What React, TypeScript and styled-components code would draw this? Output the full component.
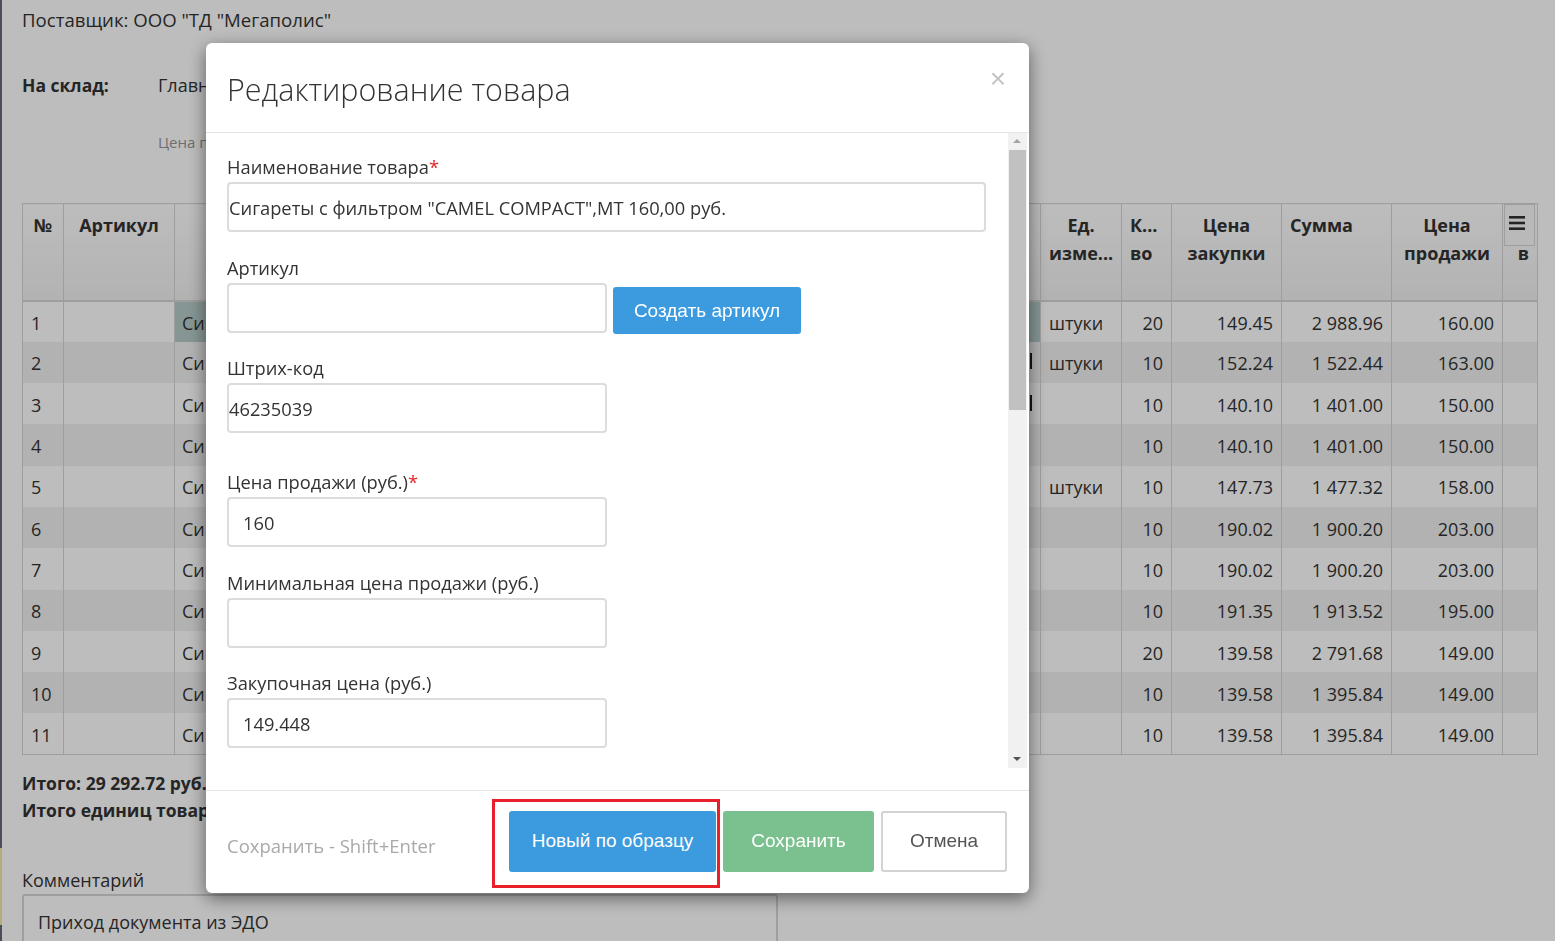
import React from "react";
import styled, { createGlobalStyle } from "styled-components";

const GlobalStyle = createGlobalStyle`
  html, body {
    margin: 0;
    padding: 0;
    height: 100%;
    overflow: hidden;
  }
  body {
    background: #fff;
    font-family: "Open Sans", "Liberation Sans", sans-serif;
    color: #333;
  }
  * {
    box-sizing: border-box;
  }
`;

type Row = {
  unit: string;
  qty: number;
  buy: string;
  sum: string;
  sell: string;
  mark?: boolean;
};

const rows: Row[] = [
  { unit: "штуки", qty: 20, buy: "149.45", sum: "2 988.96", sell: "160.00" },
  { unit: "штуки", qty: 10, buy: "152.24", sum: "1 522.44", sell: "163.00", mark: true },
  { unit: "", qty: 10, buy: "140.10", sum: "1 401.00", sell: "150.00", mark: true },
  { unit: "", qty: 10, buy: "140.10", sum: "1 401.00", sell: "150.00" },
  { unit: "штуки", qty: 10, buy: "147.73", sum: "1 477.32", sell: "158.00" },
  { unit: "", qty: 10, buy: "190.02", sum: "1 900.20", sell: "203.00" },
  { unit: "", qty: 10, buy: "190.02", sum: "1 900.20", sell: "203.00" },
  { unit: "", qty: 10, buy: "191.35", sum: "1 913.52", sell: "195.00" },
  { unit: "", qty: 20, buy: "139.58", sum: "2 791.68", sell: "149.00" },
  { unit: "", qty: 10, buy: "139.58", sum: "1 395.84", sell: "149.00" },
  { unit: "", qty: 10, buy: "139.58", sum: "1 395.84", sell: "149.00" },
];

const colWidths = [41, 111, 866, 81, 50, 110, 110, 111, 35];

const HamburgerIcon = () => (
  <svg width="18" height="16" viewBox="0 0 18 16">
    <rect x="1" y="1" width="16" height="2.6" fill="#333" />
    <rect x="1" y="6.7" width="16" height="2.6" fill="#333" />
    <rect x="1" y="12.4" width="16" height="2.6" fill="#333" />
  </svg>
);

export default function App() {
  return (
    <>
      <GlobalStyle />
      <Shell>
        <Strip>
          <StripPart $h={848} />
          <StripPart $h={77} $accent />
          <StripPart $h={0} />
        </Strip>
        <Main>
          <Supplier>Поставщик: ООО "ТД "Мегаполис"</Supplier>
          <WarehouseRow>
            <WarehouseLabel>На склад:</WarehouseLabel>
            <span>Главный склад</span>
          </WarehouseRow>
          <PriceHint>Цена продажи рассчитывается автоматически</PriceHint>

          <Table>
            <colgroup>
              {colWidths.map((w, i) => (
                <col key={i} style={{ width: w }} />
              ))}
            </colgroup>
            <thead>
              <tr>
                <Th $align="center">№</Th>
                <Th $align="center">Артикул</Th>
                <Th $align="center">Наименование</Th>
                <Th $align="center">
                  Ед.
                  <br />
                  изме...
                </Th>
                <Th>
                  К...
                  <br />
                  во
                </Th>
                <Th $align="center">
                  Цена
                  <br />
                  закупки
                </Th>
                <Th>Сумма</Th>
                <Th $align="center">
                  Цена
                  <br />
                  продажи
                </Th>
                <MenuTh>
                  <MenuBox>
                    <HamburgerIcon />
                  </MenuBox>
                  <MenuTail>в</MenuTail>
                </MenuTh>
              </tr>
            </thead>
            <tbody>
              {rows.map((r, i) => (
                <Tr key={i} $striped={i % 2 === 1}>
                  <Td>{i + 1}</Td>
                  <Td />
                  <Td $selected={i === 0} $padLeft={7}>
                    {r.mark && <CellMark />}
                    Сигареты с фильтром
                  </Td>
                  <Td>{r.unit}</Td>
                  <Td $align="right">{r.qty}</Td>
                  <Td $align="right">{r.buy}</Td>
                  <Td $align="right">{r.sum}</Td>
                  <Td $align="right">{r.sell}</Td>
                  <Td />
                </Tr>
              ))}
            </tbody>
          </Table>

          <Totals>
            <div>Итого: 29 292.72 руб.</div>
            <div>Итого единиц товара: 190</div>
          </Totals>

          <CommentLabel>Комментарий</CommentLabel>
          <CommentBox>Приход документа из ЭДО</CommentBox>
        </Main>
      </Shell>

      <Backdrop />

      <Modal>
        <ModalHeader>
          <ModalTitle>Редактирование товара</ModalTitle>
          <CloseButton>×</CloseButton>
        </ModalHeader>

        <ModalBody>
          <ScrollArea>
            <Form>
              <Field>
                <Label>
                  Наименование товара<Req>*</Req>
                </Label>
                <Input $wide $flush>
                  Сигареты с фильтром "CAMEL COMPACT",МТ 160,00 руб.
                </Input>
              </Field>

              <Field $gap={23}>
                <Label>Артикул</Label>
                <InputRow>
                  <Input />
                  <BlueButton $small>Создать артикул</BlueButton>
                </InputRow>
              </Field>

              <Field $gap={37}>
                <Label>Штрих-код</Label>
                <Input $flush>46235039</Input>
              </Field>

              <Field>
                <Label>
                  Цена продажи (руб.)<Req>*</Req>
                </Label>
                <Input>160</Input>
              </Field>

              <Field $gap={23}>
                <Label>Минимальная цена продажи (руб.)</Label>
                <Input />
              </Field>

              <Field>
                <Label>Закупочная цена (руб.)</Label>
                <Input>149.448</Input>
              </Field>

              <Field>
                <Label>Наценка (%)</Label>
                <Input>7.06</Input>
              </Field>
            </Form>
            <ScrollTrack>
              <ScrollArrow $up />
              <ScrollThumb />
              <ScrollSpace />
              <ScrollArrow />
            </ScrollTrack>
          </ScrollArea>
        </ModalBody>

        <ModalFooter>
          <ShortcutHint>Сохранить - Shift+Enter</ShortcutHint>
          <FooterButtons>
            <Marked>
              <BlueButton>Новый по образцу</BlueButton>
              <Highlight />
            </Marked>
            <GreenButton>Сохранить</GreenButton>
            <CancelButton>Отмена</CancelButton>
          </FooterButtons>
        </ModalFooter>
      </Modal>
    </>
  );
}

/* ---------- page behind ---------- */

const Shell = styled.div`
  display: flex;
  min-height: 100vh;
`;

const Strip = styled.div`
  width: 2px;
  display: flex;
  flex-direction: column;
  flex-shrink: 0;
`;

const StripPart = styled.div<{ $h: number; $accent?: boolean }>`
  height: ${({ $h }) => ($h ? `${$h}px` : "auto")};
  flex: ${({ $h }) => ($h ? "none" : "1")};
  background: ${({ $accent }) => ($accent ? "#f3eaa6" : "#646a78")};
`;

const Main = styled.div`
  flex: 1;
  padding: 8px 0 0 20px;
  font-size: 18px;
`;

const Supplier = styled.div`
  line-height: 24px;
  font-size: 18.6px;
`;

const WarehouseRow = styled.div`
  display: grid;
  grid-template-columns: 136px 1fr;
  margin-top: 41px;
  line-height: 24px;
`;

const WarehouseLabel = styled.span`
  font-weight: 700;
  font-size: 17.5px;
`;

const PriceHint = styled.div`
  margin: 35px 0 0 136px;
  font-size: 15px;
  line-height: 20px;
  color: #959595;
`;

const Table = styled.table`
  margin-top: 51px;
  width: 1515px;
  border-collapse: collapse;
  table-layout: fixed;
  border: 1px solid #d6d6d6;
`;

const Th = styled.th<{ $align?: string }>`
  height: 97px;
  padding: 7px 8px 0 8px;
  vertical-align: top;
  text-align: ${({ $align }) => $align ?? "left"};
  font-weight: 700;
  line-height: 28px;
  white-space: nowrap;
  overflow: hidden;
  background: linear-gradient(#ffffff, #f1f1f1);
  border-left: 1px solid #d6d6d6;
  border-bottom: 2px solid #d6d6d6;
`;

const MenuTh = styled.th`
  padding: 0;
  vertical-align: top;
  background: linear-gradient(#ffffff, #f1f1f1);
  border-left: 1px solid #d6d6d6;
  border-bottom: 2px solid #d6d6d6;
`;

const MenuBox = styled.div`
  width: 31px;
  height: 42px;
  margin-left: 1px;
  border: 1px solid #d6d6d6;
  display: flex;
  justify-content: center;
  padding: 10px 5px 0 0;
  background: #fafafa;
`;

const MenuTail = styled.div`
  text-align: right;
  padding-right: 8px;
  line-height: 14px;
  font-weight: 700;
`;

const Tr = styled.tr<{ $striped: boolean }>`
  background: ${({ $striped }) => ($striped ? "#f1f1f1" : "#fff")};
`;

const Td = styled.td<{ $align?: string; $selected?: boolean; $padLeft?: number }>`
  height: 41.3px;
  padding: 2px 8px 0 ${({ $padLeft }) => $padLeft ?? 8}px;
  text-align: ${({ $align }) => $align ?? "left"};
  white-space: nowrap;
  overflow: hidden;
  border-left: 1px solid #d6d6d6;
  background: ${({ $selected }) => ($selected ? "#b5cbc9" : "transparent")};
`;

const CellMark = styled.span`
  float: right;
  width: 2px;
  height: 16px;
  margin: 2px 0 0 0;
  background: #1e1e1e;
`;

const Totals = styled.div`
  margin-top: 15px;
  font-weight: 700;
  font-size: 17.5px;
  line-height: 27px;
`;

const CommentLabel = styled.div`
  margin-top: 44px;
  line-height: 24px;
`;

const CommentBox = styled.div`
  width: 756px;
  height: 80px;
  margin-top: 2px;
  border: 2px solid #d6d6d6;
  border-radius: 3px;
  padding: 14px 14px;
  line-height: 24px;
`;

/* ---------- modal ---------- */

const Backdrop = styled.div`
  position: fixed;
  inset: 0;
  background: rgba(0, 0, 0, 0.26);
`;

const Modal = styled.div`
  position: fixed;
  left: 206px;
  top: 43px;
  width: 823px;
  height: 850px;
  background: #fff;
  border-radius: 6px;
  box-shadow: 0 5px 18px rgba(0, 0, 0, 0.5);
  display: flex;
  flex-direction: column;
  overflow: hidden;
`;

const ModalHeader = styled.div`
  height: 90px;
  flex-shrink: 0;
  display: flex;
  justify-content: space-between;
  align-items: center;
  padding: 2px 23px 0 21px;
  border-bottom: 1px solid #e5e5e5;
`;

const ModalTitle = styled.h4`
  margin: 0;
  font-size: 30.5px;
  font-weight: 300;
  color: #333;
  line-height: 40px;
`;

const CloseButton = styled.span`
  align-self: flex-start;
  margin-top: 22px;
  font-family: "Liberation Sans", Arial, sans-serif;
  font-size: 28px;
  line-height: 24px;
  color: #c4c4c4;
`;

const ModalBody = styled.div`
  flex: 1;
  padding-bottom: 22px;
  display: flex;
  min-height: 0;
`;

const ScrollArea = styled.div`
  flex: 1;
  display: flex;
  overflow: hidden;
`;

const Form = styled.div`
  flex: 1;
  padding: 22px 0 0 21px;
  overflow: hidden;
`;

const Field = styled.div<{ $gap?: number }>`
  margin-bottom: ${({ $gap }) => $gap ?? 24}px;
`;

const Label = styled.div`
  font-size: 18.3px;
  line-height: 24px;
  margin-bottom: 3px;
  color: #333;
`;

const Req = styled.span`
  color: #e5252a;
`;

const InputRow = styled.div`
  display: flex;
  align-items: flex-start;
  gap: 6px;
  height: 50px;
`;

const Input = styled.div<{ $wide?: boolean; $flush?: boolean }>`
  width: ${({ $wide }) => ($wide ? "759px" : "380px")};
  height: 50px;
  flex-shrink: 0;
  border: 2px solid #dcdcdc;
  border-radius: 4px;
  padding: 0 15px 0 ${({ $flush }) => ($flush ? "0px" : "14px")};
  display: flex;
  align-items: center;
  font-size: 18.3px;
  color: #333;
  white-space: nowrap;
`;

const ScrollTrack = styled.div`
  width: 19px;
  margin-right: 2px;
  background: #f1f1f1;
  display: flex;
  flex-direction: column;
  align-items: center;
`;

const ScrollArrow = styled.div<{ $up?: boolean }>`
  height: 17px;
  width: 100%;
  position: relative;
  flex-shrink: 0;
  &::after {
    content: "";
    position: absolute;
    left: 5px;
    top: 6px;
    border-left: 4.5px solid transparent;
    border-right: 4.5px solid transparent;
    ${({ $up }) =>
      $up ? "border-bottom: 4.5px solid #a3a3a3;" : "border-top: 4.5px solid #505050;"}
  }
`;

const ScrollThumb = styled.div`
  width: 17px;
  height: 260px;
  background: #c1c1c1;
`;

const ScrollSpace = styled.div`
  flex: 1;
`;

const ModalFooter = styled.div`
  height: 103px;
  flex-shrink: 0;
  border-top: 1px solid #e5e5e5;
  display: flex;
  align-items: center;
  justify-content: space-between;
  padding: 0 22px 0 21px;
`;

const ShortcutHint = styled.div`
  font-size: 18.5px;
  color: #a9a9a9;
  margin-top: 6px;
`;

const FooterButtons = styled.div`
  display: flex;
  align-items: center;
  gap: 7px;
  margin-top: -2px;
`;

const Marked = styled.div`
  position: relative;
  display: flex;
`;

const Highlight = styled.div`
  position: absolute;
  left: -17px;
  right: -4px;
  top: -12px;
  bottom: -16px;
  border: 3px solid #e8202a;
  pointer-events: none;
`;

const ButtonBase = styled.button`
  font-family: "Liberation Sans", Arial, sans-serif;
  font-size: 19px;
  border-radius: 3px;
  cursor: pointer;
  height: 61px;
`;

const BlueButton = styled(ButtonBase)<{ $small?: boolean }>`
  background: #3c9bde;
  color: #fff;
  border: none;
  flex-shrink: 0;
  width: ${({ $small }) => ($small ? "188px" : "207px")};
  height: ${({ $small }) => ($small ? "47px" : "61px")};
  margin-top: ${({ $small }) => ($small ? "4px" : "0")};
`;

const GreenButton = styled(ButtonBase)`
  background: #7bc08f;
  color: #fff;
  border: none;
  width: 151px;
`;

const CancelButton = styled(ButtonBase)`
  background: #fff;
  color: #555;
  border: 2px solid #d3d3d3;
  width: 126px;
`;
